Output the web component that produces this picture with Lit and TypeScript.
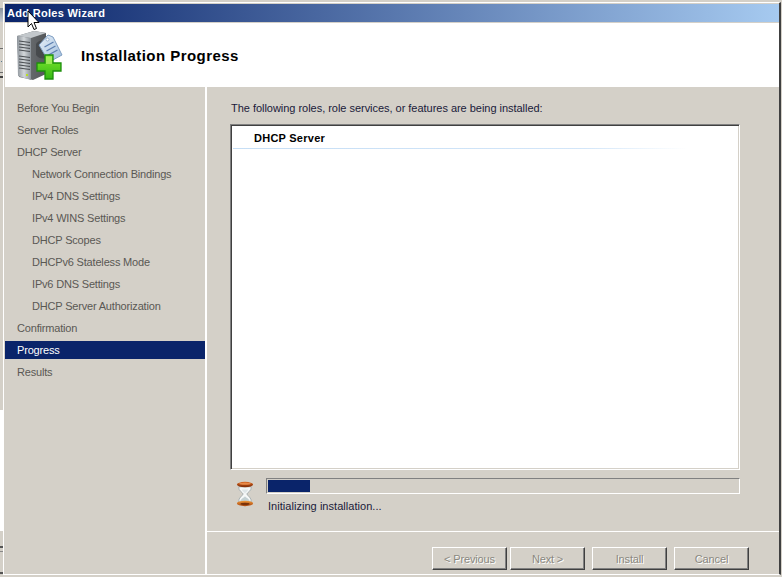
import { LitElement, html, css, svg } from "lit";
import { customElement } from "lit/decorators.js";

const NAV: [string, boolean, boolean][] = [
  ["Before You Begin", false, false],
  ["Server Roles", false, false],
  ["DHCP Server", false, false],
  ["Network Connection Bindings", true, false],
  ["IPv4 DNS Settings", true, false],
  ["IPv4 WINS Settings", true, false],
  ["DHCP Scopes", true, false],
  ["DHCPv6 Stateless Mode", true, false],
  ["IPv6 DNS Settings", true, false],
  ["DHCP Server Authorization", true, false],
  ["Confirmation", false, false],
  ["Progress", false, true],
  ["Results", false, false],
];

const serverIcon = svg`
<svg class="hero" width="50" height="52" viewBox="0 0 50 52">
  <defs>
    <linearGradient id="front" x1="0" x2="1" y1="0" y2="0"><stop offset="0" stop-color="#8d949b"/><stop offset=".5" stop-color="#d3d7da"/><stop offset="1" stop-color="#8b9299"/></linearGradient>
    <linearGradient id="side" x1="0" x2="1" y1="0" y2="0"><stop offset="0" stop-color="#74787c"/><stop offset="1" stop-color="#54575a"/></linearGradient>
    <linearGradient id="tag" x1="0" x2="1" y1="0" y2="1"><stop offset="0" stop-color="#e8f0f8"/><stop offset="1" stop-color="#9cbbdc"/></linearGradient>
    <linearGradient id="plus" x1="0" x2="0" y1="0" y2="1"><stop offset="0" stop-color="#7fe82e"/><stop offset="1" stop-color="#35b814"/></linearGradient>
  </defs>
  <path d="M2 6 L19 1 L31 3 L31 44 L18 50 L4 47 Z" fill="url(#side)"/>
  <path d="M2 6 L16 8 L16 50 L3 46 Z" fill="url(#front)"/>
  <path d="M2 6 L19 1 L31 3 L16 8 Z" fill="#c3c8cc"/>
  <path d="M4 11 L15 12.500 M4 14 L15 15.500 M4 17 L15 18.500 M4 20 L15 21.500 M4 26 L15 27.500 M4 29 L15 30.500 M4 32 L15 33.500 M4 35 L15 36.500 M4 38 L15 39.500" stroke="#4b4f53" stroke-width="1.100"/>
  <rect x="11" y="44" width="2" height="2" fill="#b8e020"/>
  <path d="M21 14 q4 -6 10 -2 l0 16 q-6 2 -10 -3z" fill="#3d4043" opacity=".7"/>
  <path d="M33 5 L24 15 L34 32 L47 25 L38 7 Z" fill="url(#tag)" stroke="#7f9ec2" stroke-width="1"/>
  <circle cx="32.500" cy="9.500" r="1.500" fill="#fff" stroke="#7f9ec2" stroke-width=".7"/>
  <path d="M29.500 17 L38.500 12 M31.500 21 L40.500 16 M33.500 25 L42.500 20" stroke="#5d7fb0" stroke-width="1.300"/>
  <path d="M30 25 H38 V33 H46 V41 H38 V49 H30 V41 H22 V33 H30 Z" fill="url(#plus)" stroke="#1d8f0c" stroke-width="1.300"/>
  <path d="M31 26.500 H37 V34 H31 Z" fill="#c4f87e" opacity=".55"/>
</svg>`;

const hourglass = svg`
<svg class="glass" width="18" height="26" viewBox="0 0 20 28">
  <defs>
    <linearGradient id="wood" x1="0" x2="0" y1="0" y2="1"><stop offset="0" stop-color="#d9641c"/><stop offset="1" stop-color="#7a2a08"/></linearGradient>
    <linearGradient id="wood2" x1="0" x2="0" y1="0" y2="1"><stop offset="0" stop-color="#f09a3a"/><stop offset="1" stop-color="#a8450f"/></linearGradient>
  </defs>
  <path d="M3 6 H17 C17.500 10.500 12.800 12 12 14 C12.800 16 17.500 18 17 23 H3 C2.500 18 7.200 16 8 14 C7.200 12 2.500 10.500 3 6Z" fill="#f6f8f8" stroke="#a3abae" stroke-width="1"/>
  <path d="M4.500 22.500 C5 19.500 8.500 18.500 10 16.500 C11.500 18.500 15 19.500 15.500 22.500Z" fill="#c3d0d3"/>
  <path d="M6.500 9 H13.500 C13 11 11 12 10 13.500 C9 12 7 11 6.500 9Z" fill="#dfe6e8"/>
  <ellipse cx="10" cy="3.500" rx="9" ry="3" fill="url(#wood)"/>
  <ellipse cx="10" cy="2.500" rx="6.500" ry="1.200" fill="#e88a4a"/>
  <ellipse cx="10" cy="24.500" rx="9" ry="3" fill="url(#wood2)"/>
  <ellipse cx="10" cy="25" rx="5" ry="1.200" fill="#7a3209"/>
</svg>`;

const cursor = svg`
<svg class="cursor" width="13" height="22" viewBox="0 0 13 22">
  <path d="M1 1 L1 17 L4.500 13.500 L7 19.500 L9.500 18.500 L7 12.500 L12 12.500 Z" fill="#fff" stroke="#000" stroke-width="1"/>
</svg>`;

@customElement("app-root")
export class AppRoot extends LitElement {
  static styles = css`
    :host {
      display: block;
      width: 782px;
      height: 577px;
      overflow: hidden;
      position: relative;
      font-family: "Liberation Sans", Arial, sans-serif;
      font-size: 11px;
      color: #000;
    }
    .desk {
      box-sizing: border-box;
      width: 782px;
      height: 577px;
      padding: 2px 1px 2px 3px;
      background-color: #d4d0c8;
    }
    .window {
      box-sizing: border-box;
      height: 100%;
      display: flex;
      flex-direction: column;
      background: #d4d0c8;
      border-top: 1px solid #fff;
      border-left: 1px solid #fff;
      border-right: 2px solid #404040;
      border-bottom: 1px solid #fff;
      padding: 1px 0 0 1px;
    }
    .title {
      flex: none;
      height: 18px;
      box-sizing: border-box;
      padding-left: 2px;
      background: linear-gradient(90deg, #0a246a, #a6caf0);
      color: #fff;
      font-weight: bold;
      line-height: 18px;
      letter-spacing: 0.3px;
    }
    .rule { flex: none; height: 1px; background: #d4d0c8; }
    .head {
      flex: none;
      height: 64px;
      background: #fff;
      display: flex;
      align-items: center;
      gap: 16px;
      padding-left: 10px;
    }
    .hero { flex: none; margin-top: 2px; }
    h1 {
      margin: 0;
      font-size: 15px;
      font-weight: bold;
      letter-spacing: 0.45px;
    }
    .main { flex: 1; min-height: 0; display: flex; }
    nav {
      flex: none;
      width: 200px;
      padding-top: 12px;
      border-right: 2px solid #fff;
      display: flex;
      flex-direction: column;
      gap: 4px;
    }
    .item {
      height: 18px;
      line-height: 18px;
      padding-left: 12px;
      color: #5a5854;
      letter-spacing: -0.18px;
    }
    .item.sub { padding-left: 27px; }
    .item.on { background: #0a246a; color: #fff; }
    .content { flex: 1; min-width: 0; display: flex; flex-direction: column; }
    .body {
      flex: 1;
      min-height: 0;
      display: flex;
      flex-direction: column;
      padding: 13px 40px 0 24px;
    }
    .lead { height: 16px; line-height: 16px; letter-spacing: -0.03px; color: #1a1a3a; }
    .list {
      box-sizing: border-box;
      height: 346px;
      margin: 8px -1px 0 -1px;
      background: #fff;
      border: 1px solid;
      border-color: #808080 #fff #fff #808080;
      box-shadow: inset 1px 1px 0 #404040, inset -1px -1px 0 #d4d0c8;
      padding: 2px;
    }
    .row {
      height: 20px;
      padding-top: 1px;
      line-height: 20px;
      padding-left: 21px;
      font-weight: bold;
      letter-spacing: 0.25px;
      border-bottom: 1px solid;
      border-image: linear-gradient(90deg, #c6def5, #d3e6f9 70%, #fff 90%) 1;
    }
    .prog {
      flex: none;
      display: flex;
      gap: 13px;
      margin-top: 8px;
      padding-left: 5px;
    }
    .glass { flex: none; margin-top: 3px; }
    .pcol { flex: 1; min-width: 0; margin-right: -1px; margin-left: -1px; }
    .track {
      box-sizing: border-box;
      height: 16px;
      padding: 1px;
      border: 1px solid;
      border-color: #808080 #fff #fff #808080;
    }
    .fill { width: 42px; height: 100%; background: #0a246a; }
    .status { margin: 5px 0 0 2px; height: 15px; line-height: 15px; letter-spacing: 0.04px; color: #1a1a3a; }
    .foot {
      flex: none;
      box-sizing: border-box;
      height: 43px;
      border-top: 1px solid #fff;
      display: flex;
      justify-content: flex-end;
      align-items: flex-start;
      padding: 15px 30px 0 0;
    }
    button {
      box-sizing: border-box;
      width: 75px;
      height: 23px;
      padding: 0;
      font: inherit;
      color: #8a8880;
      text-shadow: 1px 1px 0 #fff;
      background: #d4d0c8;
      border: 1px solid;
      border-color: #fff #404040 #404040 #fff;
      box-shadow: inset -1px -1px 0 #808080;
      letter-spacing: -0.15px;
    }
    .gap3 { margin-left: 3px; }
    .gap7 { margin-left: 7px; }
    .cursor { position: absolute; left: 27px; top: 10px; }
    .marks {
      position: absolute;
      left: 0;
      top: 0;
      width: 3px;
      height: 577px;
      background:
        linear-gradient(#6b6b6b, #6b6b6b) 0 48px / 3px 1px no-repeat,
        linear-gradient(#5a7a90, #5a7a90) 1px 61px / 1px 1px no-repeat,
        linear-gradient(#6b6b6b, #6b6b6b) 0 72px / 3px 1px no-repeat,
        linear-gradient(#404040, #404040) 0 76px / 3px 2px no-repeat,
        linear-gradient(#8a94a0, #c8ccd0) 0 8px / 3px 14px no-repeat,
        linear-gradient(#555, #555) 0 546px / 3px 2px no-repeat,
        linear-gradient(#888, #888) 0 551px / 3px 1px no-repeat,
        linear-gradient(#555, #555) 0 572px / 3px 2px no-repeat,
        linear-gradient(#fff, #fff) 0 410px / 3px 121px no-repeat;
    }
  `;

  render() {
    return html`
      <div class="desk">
        <div class="window">
          <div class="title">Add Roles Wizard</div>
          <div class="rule"></div>
          <div class="head">${serverIcon}<h1>Installation Progress</h1></div>
          <div class="main">
            <nav>
              ${NAV.map(
                ([t, sub, on]) =>
                  html`<div class="item ${sub ? "sub" : ""} ${on ? "on" : ""}">${t}</div>`
              )}
            </nav>
            <div class="content">
              <div class="body">
                <div class="lead">The following roles, role services, or features are being installed:</div>
                <div class="list"><div class="row">DHCP Server</div></div>
                <div class="prog">
                  ${hourglass}
                  <div class="pcol">
                    <div class="track"><div class="fill"></div></div>
                    <div class="status">Initializing installation...</div>
                  </div>
                </div>
              </div>
              <div class="foot">
                <button disabled>&lt; Previous</button>
                <button class="gap3" disabled>Next &gt;</button>
                <button class="gap7" disabled>Install</button>
                <button class="gap7" disabled>Cancel</button>
              </div>
            </div>
          </div>
        </div>
      </div>
      <div class="marks"></div>
      ${cursor}
    `;
  }
}
